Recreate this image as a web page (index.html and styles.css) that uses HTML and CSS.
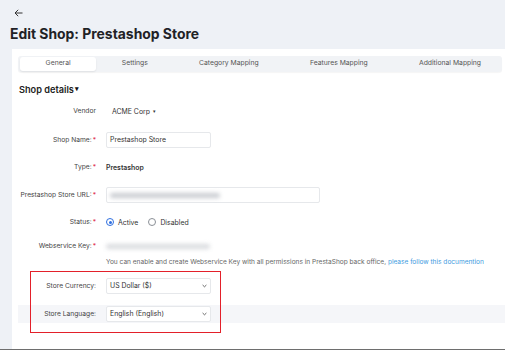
FILE: index.html
```html
<!DOCTYPE html>
<html lang="en">
<head>
  <meta charset="UTF-8">
  <title>Edit Shop: Prestashop Store</title>
  <link rel="stylesheet" href="styles.css">
</head>
<body>
  <div class="page">
    <div class="back">
      <svg width="9" height="8" viewBox="0 0 9 8"><path d="M8.5 4H1M4.2 0.8 1 4l3.2 3.2" fill="none" stroke="#333" stroke-width="1"/></svg>
    </div>
    <h1>Edit Shop: Prestashop Store</h1>

    <div class="card">
      <div class="tabs">
        <div class="tab active">General</div>
        <div class="tab">Settings</div>
        <div class="tab">Category Mapping</div>
        <div class="tab">Features Mapping</div>
        <div class="tab">Additional Mapping</div>
      </div>

      <div class="section-title">Shop details<span class="caret">&#9662;</span></div>

      <div class="form">
        <div class="row r-vendor">
          <label>Vendor</label>
          <div class="field"><span class="vendor">ACME Corp <span class="caret sm">&#9662;</span></span></div>
        </div>
        <div class="row r-name">
          <label>Shop Name:<i>*</i></label>
          <div class="field"><div class="input short">Prestashop Store</div></div>
        </div>
        <div class="row r-type">
          <label>Type:<i>*</i></label>
          <div class="field"><b class="type">Prestashop</b></div>
        </div>
        <div class="row r-url">
          <label>Prestashop Store URL:<i>*</i></label>
          <div class="field"><div class="input long"><span class="blur b-url"></span></div></div>
        </div>
        <div class="row r-status">
          <label>Status:<i>*</i></label>
          <div class="field radios">
            <span class="radio on"></span><span class="opt">Active</span>
            <span class="radio"></span><span class="opt">Disabled</span>
          </div>
        </div>
        <div class="row r-key">
          <label>Webservice Key:<i>*</i></label>
          <div class="field"><span class="blur b-key"></span></div>
        </div>
        <div class="help">You can enable and create Webservice Key with all permissions in PrestaShop back office, <a href="#">please follow this documention</a></div>

        <div class="row r-cur">
          <label>Store Currency:</label>
          <div class="field"><div class="input short select">US Dollar ($)<svg width="5" height="4" viewBox="0 0 5 4"><path d="M0.6 1l1.9 1.8L4.4 1" fill="none" stroke="#555" stroke-width="0.9"/></svg></div></div>
        </div>
        <div class="row r-lang">
          <label>Store Language:</label>
          <div class="field"><div class="input short select">English (English)<svg width="5" height="4" viewBox="0 0 5 4"><path d="M0.6 1l1.9 1.8L4.4 1" fill="none" stroke="#555" stroke-width="0.9"/></svg></div></div>
        </div>
        <div class="highlight"></div>
      </div>
    </div>
  </div>
</body>
</html>
```

FILE: styles.css
```css
body {
  margin: 0;
  font-family: Inter, "Liberation Sans", sans-serif;
  background: #eef1f6;
  color: #333;
}

.page {
  height: 349px;
  border-bottom: 1px solid #6e6e6e;
  overflow: hidden;
}

.back {
  padding: 9px 0 0 14px;
  height: 9px;
}

.back svg {
  display: block;
}

h1 {
  margin: 5px 0 0 10px;
  font-size: 13.9px;
  line-height: 22px;
  font-weight: 700;
  color: #1f2226;
}

.card {
  margin: 4px 0 0 12px;
  background: #fff;
  height: 300px;
  padding: 7px 0 0 6px;
}

.tabs {
  display: flex;
  background: #f1f3f6;
  padding: 1px 2px;
  border-radius: 3px;
  height: 14px;
  margin-right: 3px;
  box-shadow: 0 1px 1px rgba(0, 0, 0, 0.04);
}

.tab {
  font-size: 6.8px;
  line-height: 12px;
  color: #555;
  padding: 0 25.6px;
  flex: none;
}

.tab.active {
  background: #fff;
  border-radius: 3px;
  box-shadow: 0 1px 2px rgba(0, 0, 0, 0.08);
}

.section-title {
  margin-top: 11px;
  margin-left: 1px;
  font-size: 9.2px;
  font-weight: 600;
  color: #222;
  line-height: 12px;
}

.caret {
  font-size: 7px;
  vertical-align: 2px;
  color: #111;
  margin-left: 1px;
}

.caret.sm {
  font-size: 5px;
  vertical-align: 1px;
  color: #333;
}

.form {
  position: relative;
  margin-top: 7px;
}

.row {
  display: grid;
  grid-template-columns: 78px 1fr;
  column-gap: 10px;
  align-items: center;
  height: 16px;
  font-size: 6.9px;
}

.row label {
  text-align: right;
  color: #444;
  white-space: nowrap;
  justify-self: end;
  font-size: 6.7px;
}

.row label i {
  color: #e0334a;
  font-style: normal;
  margin-left: 1px;
}

.r-name { margin-top: 13px; }
.r-type { margin-top: 11px; }
.r-url { margin-top: 12px; }
.r-status { margin-top: 11px; }
.r-key { margin-top: 8px; }
.r-cur { margin-top: 11px; }

.r-lang {
  margin-top: 11px;
  background: #f5f6f9;
  height: 18px;
}

.vendor {
  color: #333;
  margin-left: 6px;
}

.input {
  border: 1px solid #e6e8eb;
  border-radius: 2px;
  height: 14px;
  line-height: 14px;
  padding: 0 3px;
  color: #333;
  position: relative;
  background: #fff;
}

.short { width: 97px; }
.long { width: 206px; }

.select {
  display: flex;
  justify-content: space-between;
  align-items: center;
}

.type {
  font-weight: 600;
  color: #333;
}

.radios {
  display: flex;
  align-items: center;
}

.radio {
  width: 6px;
  height: 6px;
  border: 1px solid #8a8f96;
  border-radius: 50%;
  position: relative;
}

.radio.on {
  border-color: #2f6fe0;
}

.radio.on::after {
  content: "";
  position: absolute;
  left: 1.5px;
  top: 1.5px;
  width: 3px;
  height: 3px;
  border-radius: 50%;
  background: #2f6fe0;
}

.opt {
  margin: 0 10px 0 4px;
  color: #333;
}

.blur {
  display: block;
  background: #c9ccd1;
  border-radius: 3px;
  filter: blur(2px);
}

.b-url {
  width: 110px;
  height: 5px;
  margin-top: 5px;
}

.b-key {
  width: 104px;
  height: 5px;
  opacity: 0.7;
}

.help {
  margin: 3px 0 0 88px;
  font-size: 6.55px;
  color: #666;
  line-height: 10px;
  white-space: nowrap;
}

.help a {
  color: #3d9be0;
  text-decoration: none;
}

.highlight {
  position: absolute;
  left: 12px;
  top: 168px;
  width: 189px;
  height: 60px;
  border: 1.5px solid #e3202a;
}
```
